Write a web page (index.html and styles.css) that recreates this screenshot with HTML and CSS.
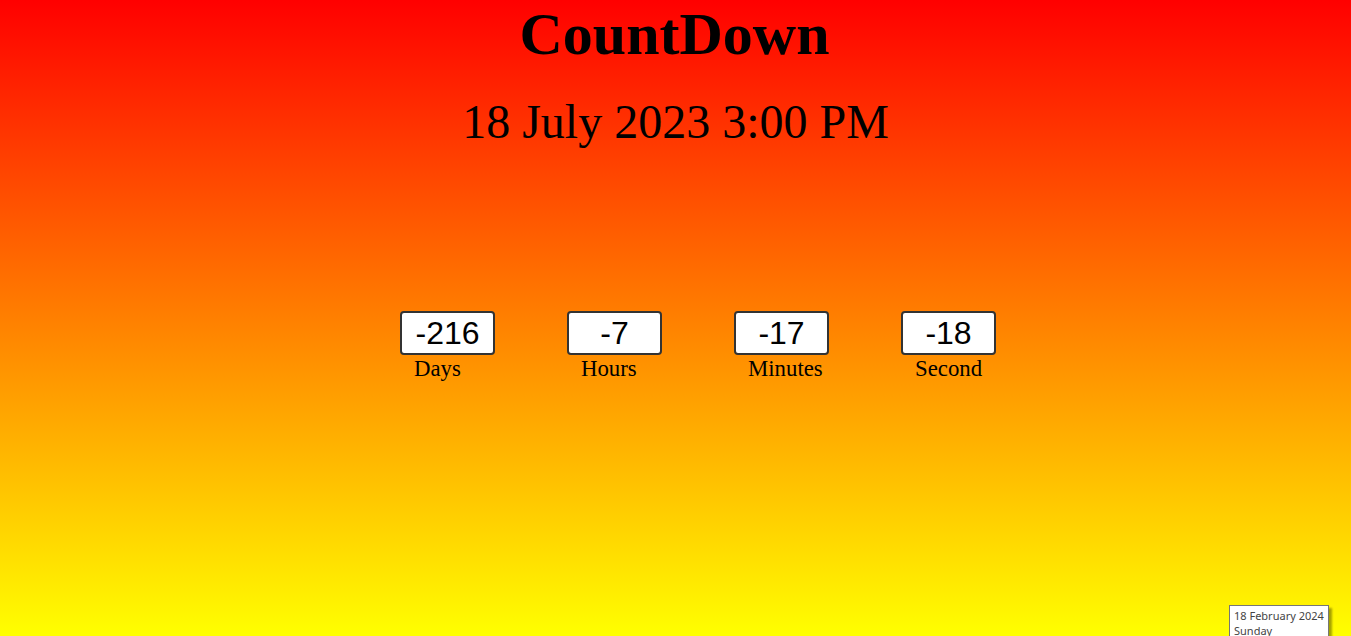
FILE: index.html
```html
<!DOCTYPE html>
<html lang="en">
<head>
<meta charset="utf-8">
<title>CountDown</title>
<link rel="stylesheet" href="styles.css">
</head>
<body>
<h1 class="title">CountDown</h1>
<p class="target">18 July 2023 3:00 PM</p>
<div class="timer">
  <div class="unit">
    <div class="box">-216</div>
    <div class="label">Days</div>
  </div>
  <div class="unit">
    <div class="box">-7</div>
    <div class="label">Hours</div>
  </div>
  <div class="unit">
    <div class="box">-17</div>
    <div class="label">Minutes</div>
  </div>
  <div class="unit">
    <div class="box">-18</div>
    <div class="label">Second</div>
  </div>
</div>
<div class="tooltip">18 February 2024<br>Sunday</div>
</body>
</html>
```

FILE: styles.css
```css
html {
  min-height: 100%;
  background: linear-gradient(to bottom, #ff0000, #ffff00);
}
body {
  margin: 0;
  min-height: 636px;
  font-family: "Liberation Serif", "Times New Roman", serif;
  color: #000;
  text-align: center;
  overflow: hidden;
}
.title {
  margin: 0;
  padding-right: 2px;
  font-size: 60px;
  font-weight: bold;
  line-height: normal;
}
.target {
  margin: 25px 0 0;
  font-size: 48px;
  line-height: normal;
}
.timer {
  display: flex;
  justify-content: center;
  gap: 72px;
  padding-left: 45px;
  margin-top: 162px;
}
.unit {
  display: flex;
  flex-direction: column;
  width: 95px;
  text-align: left;
}
.box {
  box-sizing: border-box;
  width: 95px;
  height: 44px;
  border: 2px solid #333;
  border-radius: 4px;
  background: #fff;
  font-family: "Liberation Sans", Arial, sans-serif;
  font-size: 32px;
  line-height: 40px;
  text-align: center;
}
.label {
  margin-top: 1px;
  padding-left: 14px;
  font-size: 22.8px;
  line-height: normal;
  white-space: nowrap;
}
.tooltip {
  position: absolute;
  left: 1229px;
  top: 605px;
  width: 90px;
  padding: 2px 4px 3px;
  border: 1px solid #767676;
  background: #fff;
  box-shadow: 3px 3px 2px rgba(0, 0, 0, 0.35);
  font-family: "Noto Sans", "Open Sans", sans-serif;
  font-size: 11px;
  line-height: 15px;
  color: #444;
  text-align: left;
}
```
